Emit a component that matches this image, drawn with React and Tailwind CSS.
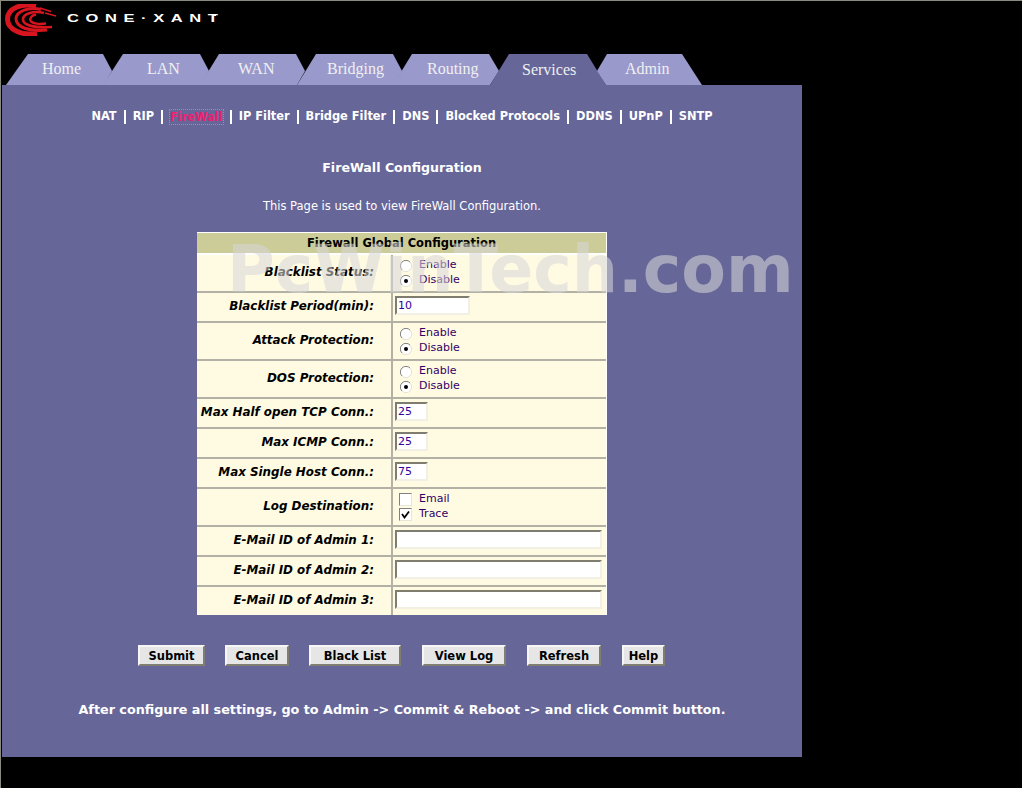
import React from "react";

const tabs = [
  { name: "Home", cls: "w-[106px] ml-[5px] bg-[#9999cc] [clip-path:polygon(0_100%,22px_0,97px_0,106px_17px,98px_100%)]", text: "pl-[36px] pt-[6px]" },
  { name: "LAN", cls: "w-[106px] -ml-[9px] bg-[#9999cc] [clip-path:polygon(0_100%,20px_0,97px_0,106px_17px,98px_100%)]", text: "pl-[44px] pt-[6px]" },
  { name: "WAN", cls: "w-[106px] -ml-[9px] bg-[#9999cc] [clip-path:polygon(0_100%,19px_0,96px_0,105px_17px,97px_100%)]", text: "pl-[38px] pt-[6px]" },
  { name: "Bridging", cls: "w-[105px] -ml-[9px] bg-[#9999cc] [clip-path:polygon(0_100%,19px_0,96px_0,105px_17px,97px_100%)]", text: "pl-[30px] pt-[6px]" },
  { name: "Routing", cls: "w-[106px] -ml-[9px] bg-[#9999cc] [clip-path:polygon(0_100%,19px_0,96px_0,106px_17px,97px_100%)]", text: "pl-[34px] pt-[6px]" },
  { name: "Services", cls: "w-[116px] -ml-[9px] bg-[#666699] [clip-path:polygon(0_100%,19px_0,97px_0,116px_100%)]", text: "pl-[32px] pt-[7px]" },
  { name: "Admin", cls: "w-[105px] -ml-[9px] bg-[#9999cc] [clip-path:polygon(9px_100%,0_17px,10px_0,85px_0,105px_100%)]", text: "pl-[28px] pt-[6px]" },
];

const subnav = ["NAT", "RIP", "FireWall", "IP Filter", "Bridge Filter", "DNS", "Blocked Protocols", "DDNS", "UPnP", "SNTP"];

const Logo = () => (
  <svg width="56" height="32" viewBox="0 0 56 32" className="shrink-0">
    <g fill="none" stroke="#d8141f">
      <path d="M32 2 C18 -1, 3.5 4, 3.5 15 C3.5 26, 18 32, 33 29.5" strokeWidth="5" />
      <path d="M37 5.5 C25 2.5, 12 7, 12 15 C12 23, 25 28, 43 26" strokeWidth="3" />
      <path d="M40 9 C30 6.5, 19 9.5, 19 15.5 C19 21, 30 24.5, 48 23" strokeWidth="2.6" />
      <path d="M32 10.5 C27.5 11.5, 25.5 14, 26.5 16.5 C28 20, 36 20.5, 42 19.5" strokeWidth="2.4" />
      <path d="M36 4 L47 7.5 M41 9 L52 12" strokeWidth="1.4" />
    </g>
  </svg>
);

const Radio = ({ on }) => (
  <svg width="12" height="12" viewBox="0 0 12 12" className="shrink-0">
    <circle cx="6" cy="6" r="5.5" fill="#ffffff" />
    <path d="M10 2 A5.5 5.5 0 0 0 2 10" fill="none" stroke="#808080" strokeWidth="1" />
    <path d="M10 2 A5.5 5.5 0 0 1 2 10" fill="none" stroke="#e4e2d4" strokeWidth="1" />
    {on && <circle cx="6" cy="6" r="2" fill="#000000" />}
  </svg>
);

const Check = ({ on }) => (
  <span className="block w-[13px] h-[13px] -ml-[1px] bg-white border border-t-[#808080] border-l-[#808080] border-r-[#e8e6d8] border-b-[#e8e6d8] shrink-0">
    {on && (
      <svg width="11" height="11" viewBox="0 0 11 11">
        <path d="M2 5 L4.5 8.5 L9 2.5" fill="none" stroke="#000" strokeWidth="1.8" />
      </svg>
    )}
  </span>
);

const Options = ({ kind, items }) => (
  <div className="flex flex-col pl-[7px] gap-[3px]">
    {items.map((it) => (
      <div key={it.label} className="flex items-center h-[12px] gap-[7px] text-[11px] text-[#330066]">
        {kind === "radio" ? <Radio on={it.on} /> : <Check on={it.on} />}
        <span>{it.label}</span>
      </div>
    ))}
  </div>
);

const Field = ({ value, w }) => (
  <div className="pl-[2px] pb-[4px]">
    <input
      readOnly
      value={value || ""}
      className={`${w} block h-[19px] bg-white border-2 border-t-[#7f7d70] border-l-[#7f7d70] border-r-[#f2f0e4] border-b-[#f2f0e4] px-[1px] text-[11px] text-[#330099] outline-none`}
    />
  </div>
);

const Row = ({ label, h, first, children }) => (
  <div className={`flex ${h} border-t-2 ${first ? "border-white" : "border-[#b3b1a6]"} bg-[#fffbe3]`}>
    <div className="w-[194px] shrink-0 flex items-center justify-end pr-[17px] text-[11.9px] font-bold italic text-black whitespace-nowrap">
      {label}
    </div>
    <div className="w-[2px] shrink-0 bg-[#b3b1a6]" />
    <div className="flex-1 flex items-center">{children}</div>
  </div>
);

const enableDisable = [{ label: "Enable" }, { label: "Disable", on: true }];

const Btn = ({ w, children }) => (
  <button className={`${w} h-[21px] pt-[1px] bg-[#e6e6e6] border-2 border-t-[#f6f6f6] border-l-[#f6f6f6] border-r-[#807e72] border-b-[#807e72] text-[11.5px] font-bold text-black`}>
    {children}
  </button>
);

export default function App() {
  return (
    <div className="relative w-[1022px] h-[788px] overflow-hidden bg-black font-['DejaVu_Sans',sans-serif] border-t border-l border-[#8a8a80]">
      {/* header */}
      <div className="h-[53px] flex items-start pl-[3px] pt-[3px]">
        <Logo />
        <div className="relative mt-[9px] ml-[7px]">
          <span className="block origin-left scale-x-[1.5] text-[11px] leading-[11px] font-bold text-white tracking-[4.4px] font-['Liberation_Sans',sans-serif] whitespace-nowrap">
            CONE·XANT
          </span>
          <span className="absolute left-[145px] top-[1px] w-[4px] h-[2px] bg-white" />
        </div>
      </div>

      {/* tabs */}
      <div className="flex h-[31px]">
        {tabs.map((t) => (
          <div key={t.name} className={`${t.cls} relative h-[31px] shrink-0`}>
            <div className={`${t.text} font-['Liberation_Serif',serif] text-[16px] leading-[18px] text-[#f0f0f0]`}>
              {t.name}
            </div>
          </div>
        ))}
      </div>

      {/* panel */}
      <div className="w-[800px] ml-[1px] h-[672px] bg-[#666699] flex flex-col items-center text-white">
        <div className="mt-[24px] h-[16px] flex items-center gap-[7px] text-[11.4px] font-bold">
          {subnav.map((s, i) => (
            <React.Fragment key={s}>
              {i > 0 && <span className="w-[2px] h-[14px] bg-white" />}
              {s === "FireWall" ? (
                <span className="text-[#ee1f6f] outline-1 outline-dotted outline-[#999977] leading-[14px]">{s}</span>
              ) : (
                <span>{s}</span>
              )}
            </React.Fragment>
          ))}
        </div>
        <div className="mt-[35px] h-[16px] leading-[16px] text-[12.6px] font-bold">FireWall Configuration</div>
        <div className="mt-[23px] h-[14px] leading-[14px] text-[11.5px]">This Page is used to view FireWall Configuration.</div>

        {/* config table */}
        <div className="mt-[19px] w-[410px] border-t border-r border-white flex flex-col">
          <div className="h-[20px] pt-[1px] bg-[#cccc99] text-black text-[11.5px] font-bold flex items-center justify-center">
            Firewall Global Configuration
          </div>
          <Row first label="Blacklist Status:" h="h-[38px]"><Options kind="radio" items={enableDisable} /></Row>
          <Row label="Blacklist Period(min):" h="h-[30px]"><Field value="10" w="w-[75px]" /></Row>
          <Row label="Attack Protection:" h="h-[38px]"><Options kind="radio" items={enableDisable} /></Row>
          <Row label="DOS Protection:" h="h-[38px]"><Options kind="radio" items={enableDisable} /></Row>
          <Row label="Max Half open TCP Conn.:" h="h-[30px]"><Field value="25" w="w-[33px]" /></Row>
          <Row label="Max ICMP Conn.:" h="h-[30px]"><Field value="25" w="w-[33px]" /></Row>
          <Row label="Max Single Host Conn.:" h="h-[30px]"><Field value="75" w="w-[33px]" /></Row>
          <Row label="Log Destination:" h="h-[38px]">
            <Options kind="check" items={[{ label: "Email" }, { label: "Trace", on: true }]} />
          </Row>
          <Row label="E-Mail ID of Admin 1:" h="h-[30px]"><Field w="w-[207px]" /></Row>
          <Row label="E-Mail ID of Admin 2:" h="h-[30px]"><Field w="w-[207px]" /></Row>
          <Row label="E-Mail ID of Admin 3:" h="h-[30px]"><Field w="w-[207px]" /></Row>
        </div>

        <div className="mt-[30px] w-full pl-[136px] flex">
          <Btn w="w-[67px] mr-[20px]">Submit</Btn>
          <Btn w="w-[64px] mr-[20px]">Cancel</Btn>
          <Btn w="w-[92px] mr-[21px]">Black List</Btn>
          <Btn w="w-[84px] mr-[21px]">View Log</Btn>
          <Btn w="w-[74px] mr-[21px]">Refresh</Btn>
          <Btn w="w-[43px]">Help</Btn>
        </div>

        <div className="mt-[36px] text-[12.75px] leading-[16px] font-bold whitespace-nowrap">
          After configure all settings, go to Admin -&gt; Commit &amp; Reboot -&gt; and click Commit button.
        </div>
      </div>

      {/* watermark */}
      <div className="absolute left-[226px] top-[231px] text-[65px] leading-[76px] font-bold text-[#d6d6d8]/[.56] whitespace-nowrap pointer-events-none">
        PcWinTech.com
      </div>
    </div>
  );
}
